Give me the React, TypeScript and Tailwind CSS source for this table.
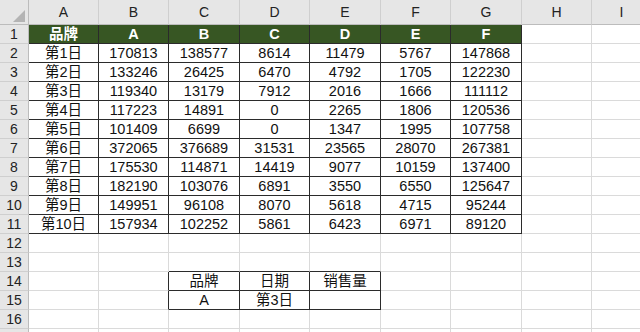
import React from "react";

const cols = ["A", "B", "C", "D", "E", "F", "G", "H", "I"];

const data: (string | number)[][] = [
  ["第1日", 170813, 138577, 8614, 11479, 5767, 147868],
  ["第2日", 133246, 26425, 6470, 4792, 1705, 122230],
  ["第3日", 119340, 13179, 7912, 2016, 1666, 111112],
  ["第4日", 117223, 14891, 0, 2265, 1806, 120536],
  ["第5日", 101409, 6699, 0, 1347, 1995, 107758],
  ["第6日", 372065, 376689, 31531, 23565, 28070, 267381],
  ["第7日", 175530, 114871, 14419, 9077, 10159, 137400],
  ["第8日", 182190, 103076, 6891, 3550, 6550, 125647],
  ["第9日", 149951, 96108, 8070, 5618, 4715, 95244],
  ["第10日", 157934, 102252, 5861, 6423, 6971, 89120],
];

const header = ["品牌", "A", "B", "C", "D", "E", "F"];

function cellInfo(r: number, c: number): { text: string; cls: string } {
  let text = "";
  let right = "border-r-[#dadada]";
  let bottom = "border-b-[#dadada]";
  let bg = "bg-white";
  let color = "text-[#111]";
  let weight = "";
  if (r >= 1 && r <= 11 && c <= 6) {
    right = "border-r-[#2b2b2b]";
    bottom = "border-b-[#2b2b2b]";
    if (r === 1) {
      bg = "bg-[#375623]";
      color = "text-white";
      weight = "font-bold";
      text = header[c];
    } else {
      text = String(data[r - 2][c]);
    }
  }
  if (r === 13 && c >= 2 && c <= 4) bottom = "border-b-[#2b2b2b]";
  if ((r === 14 || r === 15) && c === 1) right = "border-r-[#2b2b2b]";
  if ((r === 14 || r === 15) && c >= 2 && c <= 4) {
    right = "border-r-[#2b2b2b]";
    bottom = "border-b-[#2b2b2b]";
    if (r === 14) text = ["品牌", "日期", "销售量"][c - 2];
    if (r === 15) text = ["A", "第3日", ""][c - 2];
  }
  return { text, cls: `${right} ${bottom} ${bg} ${color} ${weight}` };
}

export default function App() {
  const rows = Array.from({ length: 17 }, (_, i) => i + 1);
  return (
    <div
      className="w-[640px] h-[332px] overflow-hidden bg-white"
      style={{ fontFamily: '"Liberation Sans", "Noto Sans CJK SC", sans-serif' }}
    >
      <div className="grid grid-cols-[29px_70px_70px_71px_70px_71px_70px_71px_70px_60px] grid-rows-[25px_repeat(17,19px)]">
        <div className="relative bg-[#e6e6e6] border-r border-b border-[#bcbcbc]">
          <svg className="absolute right-[3px] bottom-[2px]" width="12" height="12" viewBox="0 0 12 12">
            <polygon points="12,0 12,12 0,12" fill="#b4b4b4" />
          </svg>
        </div>
        {cols.map((c) => (
          <div
            key={c}
            className="bg-[#e6e6e6] border-r border-b border-r-[#cfcfcf] border-b-[#bcbcbc] flex items-end justify-center pb-[1px] text-[14px] text-[#222]"
          >
            {c}
          </div>
        ))}
        {rows.map((r) => (
          <React.Fragment key={r}>
            <div className="bg-[#e6e6e6] border-r border-b border-r-[#bcbcbc] border-b-[#cfcfcf] flex items-center justify-center text-[14px] text-[#222]">
              {r <= 16 ? r : ""}
            </div>
            {cols.map((_, c) => {
              const info = cellInfo(r, c);
              return (
                <div
                  key={c}
                  className={`border-r border-b ${info.cls} flex items-center justify-center text-[14.5px] leading-none whitespace-nowrap`}
                >
                  {info.text}
                </div>
              );
            })}
          </React.Fragment>
        ))}
      </div>
    </div>
  );
}
